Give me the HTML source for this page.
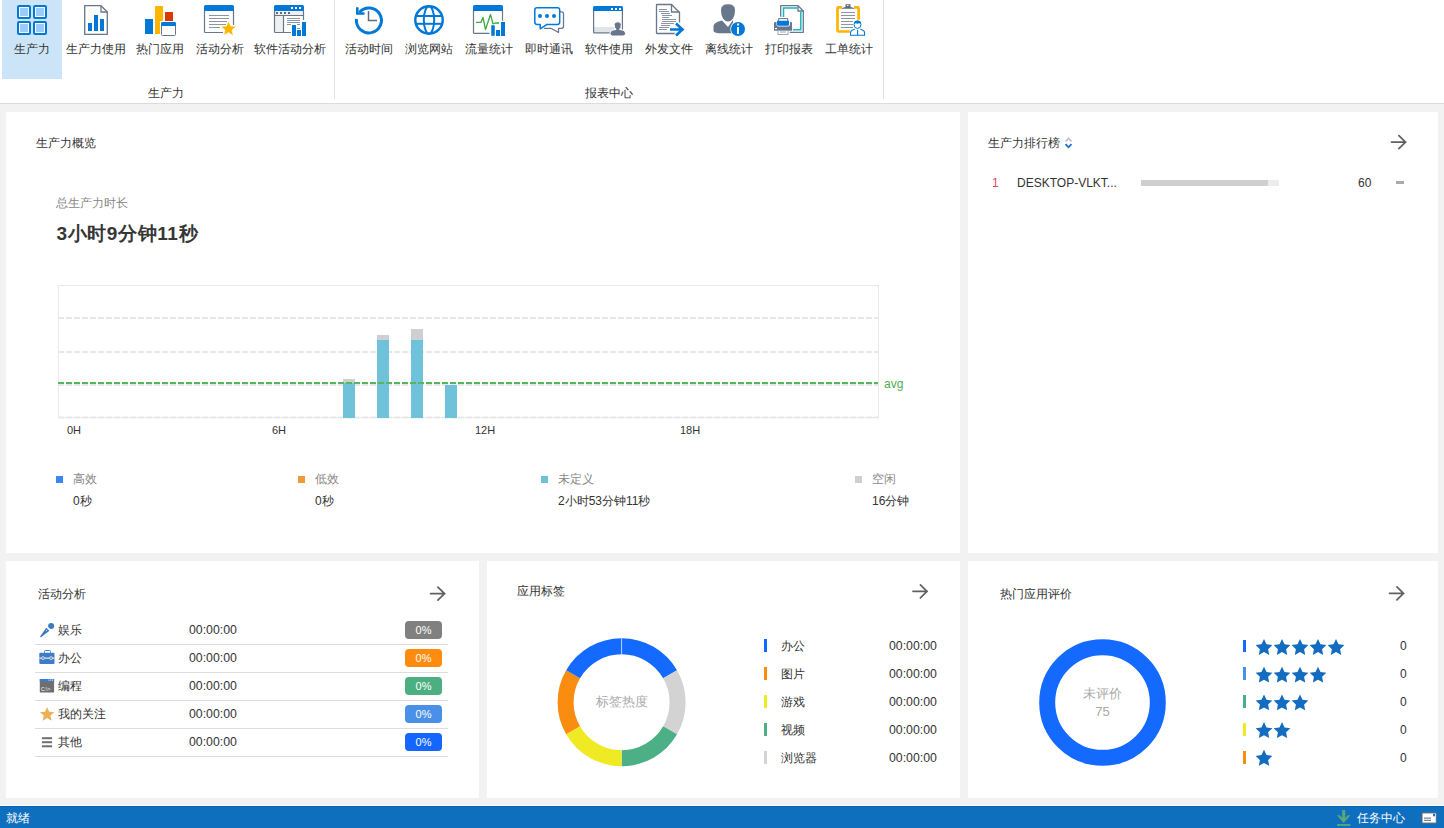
<!DOCTYPE html>
<html><head><meta charset="utf-8">
<style>
*{margin:0;padding:0;box-sizing:border-box}
html,body{width:1444px;height:828px;overflow:hidden;background:#f2f2f2;font-family:"Liberation Sans",sans-serif;font-size:12px;color:#333}
.abs{position:absolute}
#ribbon{position:absolute;left:0;top:0;width:1444px;height:104px;background:#fff;border-bottom:1px solid #dcdcdc}
.btn{position:absolute;top:0;height:79px;text-align:center}
.btn .lbl{position:absolute;left:0;right:0;top:41px;font-size:12px;line-height:16px;color:#333;white-space:nowrap}
.btn svg{position:absolute;top:4px}
.sel{background:#cce4f7}
.sep{position:absolute;top:0;width:1px;height:99px;background:#e1e1e1}
.grp{position:absolute;top:85px;font-size:12px;line-height:16px;color:#333;white-space:nowrap}
.panel{position:absolute;background:#fff}
.t{position:absolute;white-space:nowrap;line-height:16px}
#status{position:absolute;left:0;top:806px;width:1444px;height:22px;background:#0f6fbf;color:#fff;border-top:0}
#wline{position:absolute;left:0;top:805px;width:1444px;height:1px;background:#fffdf8}
</style></head><body>
<div id="ribbon">
  <div class="btn sel" style="left:2px;width:60px"><div class="lbl">生产力</div></div>
  <div class="btn" style="left:64px;width:64px"><div class="lbl">生产力使用</div></div>
  <div class="btn" style="left:130px;width:60px"><div class="lbl">热门应用</div></div>
  <div class="btn" style="left:190px;width:60px"><div class="lbl">活动分析</div></div>
  <div class="btn" style="left:250px;width:80px"><div class="lbl">软件活动分析</div></div>
  <div class="sep" style="left:334px"></div>
  <div class="grp" style="left:148px">生产力</div>
  <div class="btn" style="left:339px;width:60px"><div class="lbl">活动时间</div></div>
  <div class="btn" style="left:399px;width:60px"><div class="lbl">浏览网站</div></div>
  <div class="btn" style="left:459px;width:60px"><div class="lbl">流量统计</div></div>
  <div class="btn" style="left:519px;width:60px"><div class="lbl">即时通讯</div></div>
  <div class="btn" style="left:579px;width:60px"><div class="lbl">软件使用</div></div>
  <div class="btn" style="left:639px;width:60px"><div class="lbl">外发文件</div></div>
  <div class="btn" style="left:699px;width:60px"><div class="lbl">离线统计</div></div>
  <div class="btn" style="left:759px;width:60px"><div class="lbl">打印报表</div></div>
  <div class="btn" style="left:819px;width:60px"><div class="lbl">工单统计</div></div>
  <div class="sep" style="left:883px"></div>
  <div class="grp" style="left:585px">报表中心</div>
<svg class="abs" style="left:0;top:0" width="890" height="40" viewBox="0 0 890 40">
<!-- 1 grid -->
<g>
 <rect x="18" y="6" width="12" height="12" rx="1" fill="#9ccbfa" stroke="#0078d7" stroke-width="2"/>
 <rect x="34" y="6" width="12" height="12" rx="1" fill="#9ccbfa" stroke="#0078d7" stroke-width="2"/>
 <rect x="18" y="22" width="12" height="12" rx="1" fill="#9ccbfa" stroke="#0078d7" stroke-width="2"/>
 <rect x="34" y="22" width="12" height="12" rx="1" fill="#9ccbfa" stroke="#0078d7" stroke-width="2"/>
 <rect x="19.5" y="7.5" width="9" height="9" fill="none" stroke="#fff" stroke-width="1"/>
 <rect x="35.5" y="7.5" width="9" height="9" fill="none" stroke="#fff" stroke-width="1"/>
 <rect x="19.5" y="23.5" width="9" height="9" fill="none" stroke="#fff" stroke-width="1"/>
 <rect x="35.5" y="23.5" width="9" height="9" fill="none" stroke="#fff" stroke-width="1"/>
</g>
<!-- 2 doc chart -->
<g>
 <path d="M84.7 5.7 H101 L107.3 12 V34.3 H84.7 Z" fill="#fff" stroke="#68778c" stroke-width="1.3" stroke-linejoin="round"/>
 <path d="M101 5.7 V12 H107.3" fill="none" stroke="#68778c" stroke-width="1.3"/>
 <rect x="88" y="23" width="4" height="8" fill="#0078d7"/>
 <rect x="94" y="15" width="4" height="16" fill="#0078d7"/>
 <rect x="100" y="19" width="4" height="12" fill="#0078d7"/>
</g>
<!-- 3 hot apps -->
<g>
 <rect x="145" y="19" width="8" height="15" fill="#0078d7"/>
 <path d="M155 6 H163 V21 H160 V34 H155 Z" fill="#ffb400"/>
 <rect x="165" y="12" width="8" height="9" fill="#d83b01"/>
 <rect x="161.5" y="22.5" width="14" height="13" rx="1" fill="#fff" stroke="#68778c" stroke-width="1"/>
 <path d="M161 26 V23.5 Q161 22 162.5 22 H174.5 Q176 22 176 23.5 V26 Z" fill="#0078d7"/>
</g>
<!-- 4 activity analysis -->
<g>
 <path d="M223 32.5 H205.5 Q204.5 32.5 204.5 31.5 V11 M233.5 11 V25" fill="none" stroke="#68778c" stroke-width="1.2"/>
 <path d="M204 11 V6.5 Q204 5 205.5 5 H232.5 Q234 5 234 6.5 V11 Z" fill="#0078d7"/>
 <g stroke="#8a95a5" stroke-width="1">
  <line x1="209" y1="15.5" x2="229" y2="15.5"/>
  <line x1="209" y1="18.5" x2="229" y2="18.5"/>
  <line x1="209" y1="21.5" x2="227" y2="21.5"/>
  <line x1="209" y1="24.5" x2="226" y2="24.5"/>
  <line x1="209" y1="27.5" x2="220" y2="27.5"/>
 </g>
 <path d="M228.50 21.00 L230.62 26.09 L236.11 26.53 L231.92 30.11 L233.20 35.47 L228.50 32.60 L223.80 35.47 L225.08 30.11 L220.89 26.53 L226.38 26.09 Z" fill="#ffb400" stroke="#fff" stroke-width="0.5" stroke-linejoin="round"/>
</g>
<!-- 5 software activity analysis -->
<g>
 <rect x="275" y="11" width="28" height="4" fill="#f0f0f0"/>
 <rect x="275" y="15" width="8" height="17.5" fill="#f0f0f0"/>
 <path d="M291 32.5 H275.5 Q274.5 32.5 274.5 31.5 V11 M303.5 11 V20 M274.5 15.5 H303.5 M283.5 15.5 V32.5" fill="none" stroke="#68778c" stroke-width="1.2"/>
 <path d="M274 11 V6.5 Q274 5 275.5 5 H302.5 Q304 5 304 6.5 V11 Z" fill="#0078d7"/>
 <rect x="291" y="7" width="2" height="2" fill="#fff"/><rect x="295" y="7" width="2" height="2" fill="#fff"/><rect x="299" y="7" width="2" height="2" fill="#fff"/>
 <rect x="276" y="12" width="2" height="2" fill="#5f6b7b"/><rect x="280" y="12" width="2" height="2" fill="#5f6b7b"/><rect x="284" y="12" width="2" height="2" fill="#5f6b7b"/><rect x="288" y="12" width="2" height="2" fill="#5f6b7b"/>
 <g stroke="#8a95a5" stroke-width="1">
  <line x1="287" y1="18.5" x2="300" y2="18.5"/>
  <line x1="287" y1="20.5" x2="300" y2="20.5"/>
  <line x1="287" y1="22.5" x2="300" y2="22.5"/>
  <line x1="287" y1="24.5" x2="291" y2="24.5"/>
  <line x1="297" y1="24.5" x2="300" y2="24.5"/>
  <line x1="297" y1="28.5" x2="300" y2="28.5"/>
 </g>
 <rect x="292" y="25" width="4" height="11" fill="#0078d7"/>
 <rect x="297" y="30" width="4" height="6" fill="#0078d7"/>
 <rect x="302" y="22" width="4" height="14" fill="#0078d7"/>
</g>
<!-- 6 clock -->
<g>
 <path d="M356.5 19 A12.5 12.5 0 1 0 359.5 12.2" fill="none" stroke="#0078d7" stroke-width="3"/>
 <path d="M357.3 7.3 V13.5 H364.5" fill="none" stroke="#0078d7" stroke-width="2.6"/>
 <path d="M368.5 11 V20.5 H377" fill="none" stroke="#5f6b7b" stroke-width="1.5"/>
</g>
<!-- 7 globe -->
<g fill="none" stroke="#0078d7" stroke-width="2.5">
 <circle cx="429" cy="20" r="13.7"/>
 <line x1="416" y1="16" x2="442" y2="16" stroke-width="2"/>
 <line x1="416" y1="23.8" x2="442" y2="23.8" stroke-width="2"/>
 <ellipse cx="429" cy="20" rx="5.2" ry="13.7" stroke-width="2"/>
</g>
<!-- 8 traffic -->
<g>
 <path d="M489.5 33.3 H474 Q473.5 33.3 473.5 32.8 V11 M502.5 11 V20.8" fill="none" stroke="#68778c" stroke-width="1.2"/>
 <path d="M473 11 V6.5 Q473 5 474.5 5 H501.5 Q503 5 503 6.5 V11 Z" fill="#0078d7"/>
 <path d="M476 22.3 H481 L483 17.5 L485.5 29.5 L490.5 14.5 L493 24 L495 23 H499" fill="none" stroke="#3aaa44" stroke-width="1.3" stroke-linejoin="round"/>
 <rect x="491" y="25" width="4" height="11" fill="#0078d7" stroke="#fff" stroke-width="0.5"/>
 <rect x="496" y="30" width="4" height="6" fill="#0078d7"/>
 <rect x="501" y="22" width="4" height="14" fill="#0078d7"/>
</g>
<!-- 9 IM -->
<g>
 <path d="M551 28.3 H544 M558.8 11.8 H561.5 Q563.5 11.8 563.5 13.8 V26.3 Q563.5 28.3 561.5 28.3 H558.5 V32.5 L551 28.3" fill="none" stroke="#68778c" stroke-width="1.3" stroke-linejoin="round"/>
 <path d="M537 7.8 H557.5 Q559.7 7.8 559.7 10 V22 Q559.7 24.4 557.5 24.4 H547 L540.2 28.8 V24.4 H537 Q534.8 24.4 534.8 22 V10 Q534.8 7.8 537 7.8 Z" fill="#fff" stroke="#0078d7" stroke-width="1.5" stroke-linejoin="round"/>
 <circle cx="540" cy="16" r="2" fill="#0078d7"/><circle cx="547" cy="16" r="2" fill="#0078d7"/><circle cx="554" cy="16" r="2" fill="#0078d7"/>
</g>
<!-- 10 software usage -->
<g>
 <rect x="594" y="27" width="20" height="5.5" fill="#e1e4e8"/>
 <path d="M610 32.8 H594.2 Q593.6 32.8 593.6 32.2 V11 M622.4 11 V29.7" fill="none" stroke="#68778c" stroke-width="1.2"/>
 <path d="M593 11 V7.5 Q593 6 594.5 6 H621.5 Q623 6 623 7.5 V11 Z" fill="#0078d7"/>
 <rect x="611" y="8" width="2" height="2" fill="#fff"/><rect x="615" y="8" width="2" height="2" fill="#fff"/><rect x="619" y="8" width="2" height="2" fill="#fff"/>
 <path d="M614.2 24.5 Q614.2 21.8 617.8 21.8 Q621.3 21.8 621.3 24.5 Q621.3 28 619.5 29.5 Q625.5 30 625.5 33.5 Q625.5 36 623 36 H612.5 Q610 36 610 33.5 Q610 30 616 29.5 Q614.2 28 614.2 24.5 Z" fill="#68778c" stroke="#fff" stroke-width="1"/>
</g>
<!-- 11 outgoing file -->
<g>
 <path d="M675.5 33.5 H657 Q656.5 33.5 656.5 33 V5 Q656.5 4.5 657 4.5 H671.5 L679.5 12.5 V22.5" fill="none" stroke="#68778c" stroke-width="1.3" stroke-linejoin="round"/>
 <path d="M671.5 4.5 V12 H679.5" fill="none" stroke="#68778c" stroke-width="1.3"/>
 <g stroke="#8a95a5" stroke-width="1">
  <line x1="659" y1="9.5" x2="667" y2="9.5"/>
  <line x1="659" y1="11.5" x2="669" y2="11.5"/>
  <line x1="661" y1="13.5" x2="670" y2="13.5"/>
  <line x1="662" y1="15.5" x2="672" y2="15.5"/>
  <line x1="662" y1="17.5" x2="669" y2="17.5"/>
  <line x1="662" y1="19.5" x2="676" y2="19.5"/>
  <line x1="662" y1="21.5" x2="676" y2="21.5"/>
  <line x1="661" y1="23.5" x2="674" y2="23.5"/>
  <line x1="661" y1="25.5" x2="670" y2="25.5"/>
  <line x1="659" y1="27.5" x2="669" y2="27.5"/>
  <line x1="659" y1="29.5" x2="667" y2="29.5"/>
 </g>
 <path d="M670 29.5 H683 M676 23.5 L682.5 29.5 L676 35.5" fill="none" stroke="#fff" stroke-width="5"/>
 <path d="M670 29.5 H683 M676 23.5 L682.5 29.5 L676 35.5" fill="none" stroke="#0078d7" stroke-width="2.6"/>
</g>
<!-- 12 offline -->
<g>
 <path d="M722 20.5 Q714 22 713.5 26 V31 Q714 33.3 722 33.3 H733 V20.5 Q733.5 20 733 20 L728 27 Z" fill="#68778c"/>
 <path d="M721 10 Q721 4.2 728 4.2 Q735 4.2 735 10 Q735 15 733 18.5 Q731 21.5 728 21.5 Q725 21.5 723 18.5 Q721 15 721 10 Z" fill="#68778c"/>
 <circle cx="738" cy="29" r="7.7" fill="#fff"/>
 <circle cx="738" cy="29" r="7" fill="#0078d7"/>
 <rect x="737" y="23.5" width="2" height="2" fill="#fff"/>
 <rect x="737" y="27" width="2" height="7" fill="#fff"/>
</g>
<!-- 13 print -->
<g>
 <path d="M780.7 16.7 V5.7 H798 L803.3 11 V32.3 H789.8" fill="none" stroke="#68778c" stroke-width="1.3" stroke-linejoin="round"/>
 <path d="M798 5.7 V11 H803.3" fill="none" stroke="#68778c" stroke-width="1.3"/>
 <path d="M783.5 16.9 V8 H797.5 M800.8 11.5 V29.7 H793" fill="none" stroke="#1ab4c0" stroke-width="1.5"/>
 <rect x="778.7" y="18.6" width="9" height="4" fill="#fff" stroke="#68778c" stroke-width="1"/>
 <path d="M774 23 Q774 22 775.5 22 H776.5 V25 Q777 26.5 779 26.5 H787.5 Q789.5 26.5 790 25 V22 H791 Q792 22 792 23 V30.7 H774 Z" fill="#68778c"/>
 <path d="M777 20.8 H789 V24.3 Q789 25.8 787.5 25.8 H778.5 Q777 25.8 777 24.3 Z" fill="#0078d7"/>
 <rect x="775" y="28" width="2" height="1.2" fill="#fff"/>
 <rect x="778" y="30.5" width="10" height="4" fill="#fff" stroke="#a0a8b4" stroke-width="1"/>
 <line x1="780" y1="32" x2="786" y2="32" stroke="#8a95a5" stroke-width="0.8"/>
</g>
<!-- 14 work order -->
<g>
 <path d="M849.8 31.5 H838.5 Q837.5 31.5 837.5 30.5 V8.3 Q837.5 7.3 838.5 7.3 H842 M854 7.3 H857.6 Q858.6 7.3 858.6 8.3 V19.8" fill="none" stroke="#ffb400" stroke-width="2.7"/>
 <path d="M845.5 4.2 H850.5 V7 L854 8 V8.8 H842 V8 L845.5 7 Z" fill="#5f6b7b"/>
 <rect x="847" y="5" width="1.5" height="1" fill="#fff"/>
 <g stroke="#8a95a5" stroke-width="1">
  <line x1="841" y1="12.5" x2="855" y2="12.5"/>
  <line x1="841" y1="15.5" x2="855" y2="15.5"/>
  <line x1="841" y1="18.5" x2="855" y2="18.5"/>
  <line x1="841" y1="21.5" x2="853" y2="21.5"/>
  <line x1="841" y1="24.5" x2="853" y2="24.5"/>
  <line x1="841" y1="27.5" x2="853" y2="27.5"/>
 </g>
 <ellipse cx="857.5" cy="24.8" rx="4.2" ry="4.5" fill="#fff"/>
 <path d="M854 24.5 Q854 20.8 857.5 20.8 Q861 20.8 861 24.5 Q861 28.4 857.5 28.4 Q854 28.4 854 24.5 Z" fill="#fff" stroke="#0078d7" stroke-width="1"/>
 <path d="M854 23.8 Q854 20.8 857.5 20.8 Q861 20.8 861 23.8 Q859 22.8 857.5 23.8 Q856 22.8 854 23.8 Z" fill="#0078d7"/>
 <path d="M854.8 29.3 Q850.5 30.3 850.5 33 V35.2 H864.6 V33 Q864.6 30.3 860.3 29.3 M857.6 29.8 V35" fill="#fff" stroke="#0078d7" stroke-width="1.1"/>
</g>
</svg>
</div>

<!-- Panel 1 -->
<div class="panel" style="left:6px;top:112px;width:954px;height:441px"></div>
<div class="t" style="left:36px;top:135px">生产力概览</div>
<div class="t" style="left:56px;top:195px;color:#888">总生产力时长</div>
<div class="t" style="left:56.5px;top:222px;font-size:19px;line-height:24px;font-weight:bold;color:#363636;letter-spacing:0.6px">3小时9分钟11秒</div>

<!-- chart -->
<svg class="abs" style="left:0;top:0" width="960" height="560">
  <rect x="58.5" y="285.5" width="820" height="132" fill="none" stroke="#e8e8e8" stroke-width="1"/>
  <line x1="58" y1="318" x2="878" y2="318" stroke="#e8e8e8" stroke-width="2" stroke-dasharray="6 2"/>
  <line x1="58" y1="352" x2="878" y2="352" stroke="#e8e8e8" stroke-width="2" stroke-dasharray="6 2"/>
  <line x1="58" y1="385" x2="878" y2="385" stroke="#e8e8e8" stroke-width="2" stroke-dasharray="6 2"/>
  <line x1="58" y1="417.5" x2="878" y2="417.5" stroke="#e8e8e8" stroke-width="2" stroke-dasharray="6 2"/>
  <rect x="343" y="379" width="12" height="4" fill="#cfcfd3"/>
  <rect x="343" y="383" width="12" height="35" fill="#6ec3da"/>
  <rect x="377" y="335" width="12" height="5" fill="#cfcfd3"/>
  <rect x="377" y="340" width="12" height="78" fill="#6ec3da"/>
  <rect x="411" y="329" width="12" height="11" fill="#cfcfd3"/>
  <rect x="411" y="340" width="12" height="78" fill="#6ec3da"/>
  <rect x="445" y="385" width="12" height="33" fill="#6ec3da"/>
  <line x1="58" y1="383" x2="878" y2="383" stroke="#55b759" stroke-width="2" stroke-dasharray="6 2"/>
</svg>
<div class="t" style="left:67px;top:422px;font-size:11px">0H</div>
<div class="t" style="left:272px;top:422px;font-size:11px">6H</div>
<div class="t" style="left:475px;top:422px;font-size:11px">12H</div>
<div class="t" style="left:680px;top:422px;font-size:11px">18H</div>
<div class="t" style="left:884px;top:376px;color:#4cb050">avg</div>

<!-- legend -->
<div class="abs" style="left:56px;top:476px;width:7px;height:7px;background:#3d85f0"></div>
<div class="t" style="left:73px;top:471px;color:#888">高效</div>
<div class="t" style="left:73px;top:493px">0秒</div>
<div class="abs" style="left:298px;top:476px;width:7px;height:7px;background:#f0993a"></div>
<div class="t" style="left:315px;top:471px;color:#888">低效</div>
<div class="t" style="left:315px;top:493px">0秒</div>
<div class="abs" style="left:541px;top:476px;width:7px;height:7px;background:#6ec3da"></div>
<div class="t" style="left:558px;top:471px;color:#888">未定义</div>
<div class="t" style="left:558px;top:493px">2小时53分钟11秒</div>
<div class="abs" style="left:855px;top:476px;width:7px;height:7px;background:#cfcfd3"></div>
<div class="t" style="left:872px;top:471px;color:#888">空闲</div>
<div class="t" style="left:872px;top:493px">16分钟</div>

<!-- Panel 2 -->
<div class="panel" style="left:968px;top:112px;width:470px;height:441px"></div>
<div class="t" style="left:988px;top:135px">生产力排行榜</div>
<div class="t" style="left:992px;top:175px;color:#e8465a">1</div>
<div class="t" style="left:1017px;top:175px">DESKTOP-VLKT...</div>
<div class="abs" style="left:1141px;top:180px;width:138px;height:6px;background:#ececec"></div>
<div class="abs" style="left:1141px;top:180px;width:127px;height:6px;background:#cfcfcf"></div>
<div class="t" style="left:1358px;top:175px">60</div>
<div class="abs" style="left:1396px;top:181px;width:8px;height:3px;background:#aaa"></div>

<!-- Panel 3 -->
<div class="panel" style="left:6px;top:561px;width:473px;height:237px"></div>
<div class="t" style="left:38px;top:586px">活动分析</div>

<!-- Panel 4 -->
<div class="panel" style="left:487px;top:561px;width:473px;height:237px"></div>
<div class="t" style="left:517px;top:583px">应用标签</div>

<!-- Panel 5 -->
<div class="panel" style="left:968px;top:561px;width:470px;height:237px"></div>
<div class="t" style="left:1000px;top:586px">热门应用评价</div>

<svg class="abs" style="left:0;top:0" width="1444" height="828">
<path d="M1391.5 142.1 H1405.8 M1398.9 135.6 L1405.5 142.1 L1398.9 148.6" fill="none" stroke="#606060" stroke-width="1.7" stroke-linecap="round" stroke-linejoin="round"/>
<path d="M430.5 593.6 H444.8 M437.9 587.1 L444.5 593.6 L437.9 600.1" fill="none" stroke="#606060" stroke-width="1.7" stroke-linecap="round" stroke-linejoin="round"/>
<path d="M913 591.3 H927.3 M920.4 584.8 L927 591.3 L920.4 597.8" fill="none" stroke="#606060" stroke-width="1.7" stroke-linecap="round" stroke-linejoin="round"/>
<path d="M1389.5 593.3 H1403.8 M1396.9 586.8 L1403.5 593.3 L1396.9 599.8" fill="none" stroke="#606060" stroke-width="1.7" stroke-linecap="round" stroke-linejoin="round"/>
<path d="M1065.5 141.4 L1068.5 138.3 L1071.5 141.4" fill="none" stroke="#bdbdbd" stroke-width="1.6"/>
<path d="M1065.5 144.2 L1068.5 147.3 L1071.5 144.2" fill="none" stroke="#1a6dc4" stroke-width="1.8"/>
<rect x="35" y="644" width="413" height="1" fill="#dddddd"/>
<rect x="35" y="672" width="413" height="1" fill="#dddddd"/>
<rect x="35" y="700" width="413" height="1" fill="#dddddd"/>
<rect x="35" y="728" width="413" height="1" fill="#dddddd"/>
<rect x="35" y="756" width="413" height="1" fill="#dddddd"/>
<circle cx="51.1" cy="625.9" r="3" fill="#3d7ac0"/>
<path d="M46.2 627.8 L49.5 630.8 L41 637.2 Q40 637.6 40.1 636.6 Z" fill="#3d7ac0"/>
<path d="M48.2 627.6 L50.2 629.4" stroke="#fff" stroke-width="0.7"/>
<circle cx="46.5" cy="630.5" r="0.55" fill="#fff"/>
<rect x="44.5" y="650.5" width="6" height="3" rx="1" fill="none" stroke="#3d7cc9" stroke-width="1"/>
<rect x="39.3" y="652.7" width="15.2" height="11.4" rx="1" fill="#3d7cc9"/>
<rect x="39.3" y="657.6" width="15.2" height="1" fill="#fff"/>
<circle cx="43" cy="658.1" r="1.5" fill="#7a8a9a" stroke="#fff" stroke-width="0.6"/>
<circle cx="51" cy="658.1" r="1.5" fill="#7a8a9a" stroke="#fff" stroke-width="0.6"/>
<rect x="39.8" y="679" width="14.3" height="13.5" rx="0.6" fill="#6e6e6e"/>
<rect x="39.8" y="679" width="14.3" height="2.6" fill="#3d7cc9"/>
<rect x="48.5" y="679.6" width="1" height="1" fill="#fff"/><rect x="50.3" y="679.6" width="1" height="1" fill="#fff"/><rect x="52.1" y="679.6" width="1" height="1" fill="#fff"/>
<text x="41" y="690.8" font-family="Liberation Sans" font-size="5" fill="#fff">C:\&gt;</text>
<path d="M47.10 706.90 L49.16 711.67 L54.33 712.15 L50.43 715.58 L51.57 720.65 L47.10 718.00 L42.63 720.65 L43.77 715.58 L39.87 712.15 L45.04 711.67 Z" fill="#ebb057" />
<rect x="41.9" y="737.2" width="10.2" height="2" fill="#707070"/>
<rect x="41.9" y="741.2" width="10.2" height="2" fill="#707070"/>
<rect x="41.9" y="745.3" width="10.2" height="2" fill="#707070"/>
<rect x="405" y="621" width="37" height="18" rx="4" fill="#808080"/>
<rect x="405" y="649" width="37" height="18" rx="4" fill="#ff8c0f"/>
<rect x="405" y="677" width="37" height="18" rx="4" fill="#4caf82"/>
<rect x="405" y="705" width="37" height="18" rx="4" fill="#4a90e8"/>
<rect x="405" y="733" width="37" height="18" rx="4" fill="#1565ff"/>
<path d="M621.60 638.20 A64 64 0 0 1 677.03 670.20 L663.17 678.20 A48 48 0 0 0 621.60 654.20 Z" fill="#1469ff"/>
<path d="M677.03 670.20 A64 64 0 0 1 677.03 734.20 L663.17 726.20 A48 48 0 0 0 663.17 678.20 Z" fill="#d3d3d3"/>
<path d="M677.03 734.20 A64 64 0 0 1 621.60 766.20 L621.60 750.20 A48 48 0 0 0 663.17 726.20 Z" fill="#4caf85"/>
<path d="M621.60 766.20 A64 64 0 0 1 566.17 734.20 L580.03 726.20 A48 48 0 0 0 621.60 750.20 Z" fill="#f0ea24"/>
<path d="M566.17 734.20 A64 64 0 0 1 566.17 670.20 L580.03 678.20 A48 48 0 0 0 580.03 726.20 Z" fill="#fa8c10"/>
<path d="M566.17 670.20 A64 64 0 0 1 621.60 638.20 L621.60 654.20 A48 48 0 0 0 580.03 678.20 Z" fill="#1469ff"/>
<line x1="621.6" y1="638.2" x2="621.6" y2="654.2" stroke="#fff" stroke-width="0.6"/>
<rect x="764" y="639" width="3" height="13" fill="#1469ff"/>
<rect x="764" y="667" width="3" height="13" fill="#fa8c10"/>
<rect x="764" y="695" width="3" height="13" fill="#f0ea24"/>
<rect x="764" y="723" width="3" height="13" fill="#4caf85"/>
<rect x="764" y="751" width="3" height="13" fill="#d3d3d3"/>
<circle cx="1102.5" cy="702.5" r="55.3" fill="none" stroke="#1469ff" stroke-width="16"/>
<rect x="1243" y="640" width="3" height="12" fill="#1469ff"/>
<path d="M1264.00 639.00 L1266.53 644.32 L1272.37 645.08 L1268.09 649.13 L1269.17 654.92 L1264.00 652.10 L1258.83 654.92 L1259.91 649.13 L1255.63 645.08 L1261.47 644.32 Z" fill="#136cbf" />
<path d="M1282.00 639.00 L1284.53 644.32 L1290.37 645.08 L1286.09 649.13 L1287.17 654.92 L1282.00 652.10 L1276.83 654.92 L1277.91 649.13 L1273.63 645.08 L1279.47 644.32 Z" fill="#136cbf" />
<path d="M1300.00 639.00 L1302.53 644.32 L1308.37 645.08 L1304.09 649.13 L1305.17 654.92 L1300.00 652.10 L1294.83 654.92 L1295.91 649.13 L1291.63 645.08 L1297.47 644.32 Z" fill="#136cbf" />
<path d="M1318.00 639.00 L1320.53 644.32 L1326.37 645.08 L1322.09 649.13 L1323.17 654.92 L1318.00 652.10 L1312.83 654.92 L1313.91 649.13 L1309.63 645.08 L1315.47 644.32 Z" fill="#136cbf" />
<path d="M1336.00 639.00 L1338.53 644.32 L1344.37 645.08 L1340.09 649.13 L1341.17 654.92 L1336.00 652.10 L1330.83 654.92 L1331.91 649.13 L1327.63 645.08 L1333.47 644.32 Z" fill="#136cbf" />
<rect x="1243" y="667" width="3" height="13" fill="#4a90e8"/>
<path d="M1264.00 666.70 L1266.53 672.02 L1272.37 672.78 L1268.09 676.83 L1269.17 682.62 L1264.00 679.80 L1258.83 682.62 L1259.91 676.83 L1255.63 672.78 L1261.47 672.02 Z" fill="#136cbf" />
<path d="M1282.00 666.70 L1284.53 672.02 L1290.37 672.78 L1286.09 676.83 L1287.17 682.62 L1282.00 679.80 L1276.83 682.62 L1277.91 676.83 L1273.63 672.78 L1279.47 672.02 Z" fill="#136cbf" />
<path d="M1300.00 666.70 L1302.53 672.02 L1308.37 672.78 L1304.09 676.83 L1305.17 682.62 L1300.00 679.80 L1294.83 682.62 L1295.91 676.83 L1291.63 672.78 L1297.47 672.02 Z" fill="#136cbf" />
<path d="M1318.00 666.70 L1320.53 672.02 L1326.37 672.78 L1322.09 676.83 L1323.17 682.62 L1318.00 679.80 L1312.83 682.62 L1313.91 676.83 L1309.63 672.78 L1315.47 672.02 Z" fill="#136cbf" />
<rect x="1243" y="695" width="3" height="13" fill="#4caf85"/>
<path d="M1264.00 694.40 L1266.53 699.72 L1272.37 700.48 L1268.09 704.53 L1269.17 710.32 L1264.00 707.50 L1258.83 710.32 L1259.91 704.53 L1255.63 700.48 L1261.47 699.72 Z" fill="#136cbf" />
<path d="M1282.00 694.40 L1284.53 699.72 L1290.37 700.48 L1286.09 704.53 L1287.17 710.32 L1282.00 707.50 L1276.83 710.32 L1277.91 704.53 L1273.63 700.48 L1279.47 699.72 Z" fill="#136cbf" />
<path d="M1300.00 694.40 L1302.53 699.72 L1308.37 700.48 L1304.09 704.53 L1305.17 710.32 L1300.00 707.50 L1294.83 710.32 L1295.91 704.53 L1291.63 700.48 L1297.47 699.72 Z" fill="#136cbf" />
<rect x="1243" y="723" width="3" height="13" fill="#f0ea24"/>
<path d="M1264.00 722.10 L1266.53 727.42 L1272.37 728.18 L1268.09 732.23 L1269.17 738.02 L1264.00 735.20 L1258.83 738.02 L1259.91 732.23 L1255.63 728.18 L1261.47 727.42 Z" fill="#136cbf" />
<path d="M1282.00 722.10 L1284.53 727.42 L1290.37 728.18 L1286.09 732.23 L1287.17 738.02 L1282.00 735.20 L1276.83 738.02 L1277.91 732.23 L1273.63 728.18 L1279.47 727.42 Z" fill="#136cbf" />
<rect x="1243" y="751" width="3" height="13" fill="#fa8c10"/>
<path d="M1264.00 749.80 L1266.53 755.12 L1272.37 755.88 L1268.09 759.93 L1269.17 765.72 L1264.00 762.90 L1258.83 765.72 L1259.91 759.93 L1255.63 755.88 L1261.47 755.12 Z" fill="#136cbf" />
</svg>
<div class="t" style="left:58px;top:621.5px">娱乐</div>
<div class="t" style="left:58px;top:649.5px">办公</div>
<div class="t" style="left:58px;top:677.5px">编程</div>
<div class="t" style="left:58px;top:705.5px">我的关注</div>
<div class="t" style="left:58px;top:733.5px">其他</div>
<div class="t" style="left:189px;top:622px;font-size:12.3px">00:00:00</div>
<div class="t" style="left:189px;top:650px;font-size:12.3px">00:00:00</div>
<div class="t" style="left:189px;top:678px;font-size:12.3px">00:00:00</div>
<div class="t" style="left:189px;top:706px;font-size:12.3px">00:00:00</div>
<div class="t" style="left:189px;top:734px;font-size:12.3px">00:00:00</div>
<div class="t" style="left:405px;top:621px;width:37px;text-align:center;font-size:11px;line-height:18px;color:#fff">0%</div>
<div class="t" style="left:405px;top:649px;width:37px;text-align:center;font-size:11px;line-height:18px;color:#fff">0%</div>
<div class="t" style="left:405px;top:677px;width:37px;text-align:center;font-size:11px;line-height:18px;color:#fff">0%</div>
<div class="t" style="left:405px;top:705px;width:37px;text-align:center;font-size:11px;line-height:18px;color:#fff">0%</div>
<div class="t" style="left:405px;top:733px;width:37px;text-align:center;font-size:11px;line-height:18px;color:#fff">0%</div>
<div class="t" style="left:581px;top:694px;width:82px;text-align:center;font-size:13px;color:#aaa">标签热度</div>
<div class="t" style="left:781px;top:638px">办公</div>
<div class="t" style="left:781px;top:666px">图片</div>
<div class="t" style="left:781px;top:694px">游戏</div>
<div class="t" style="left:781px;top:722px">视频</div>
<div class="t" style="left:781px;top:750px">浏览器</div>
<div class="t" style="left:889px;top:638px;font-size:12.3px">00:00:00</div>
<div class="t" style="left:889px;top:666px;font-size:12.3px">00:00:00</div>
<div class="t" style="left:889px;top:694px;font-size:12.3px">00:00:00</div>
<div class="t" style="left:889px;top:722px;font-size:12.3px">00:00:00</div>
<div class="t" style="left:889px;top:750px;font-size:12.3px">00:00:00</div>
<div class="t" style="left:1062px;top:685.5px;width:81px;text-align:center;font-size:13px;color:#aaa">未评价</div>
<div class="t" style="left:1062px;top:704px;width:81px;text-align:center;font-size:13px;color:#aaa">75</div>
<div class="t" style="left:1400px;top:638px">0</div>
<div class="t" style="left:1400px;top:666px">0</div>
<div class="t" style="left:1400px;top:694px">0</div>
<div class="t" style="left:1400px;top:722px">0</div>
<div class="t" style="left:1400px;top:750px">0</div>
<div id="wline"></div><div id="status">
<svg class="abs" style="left:0;top:0" width="1444" height="22" viewBox="0 806 1444 22">
 <rect x="0" y="806" width="1444" height="1" fill="#0a62b4"/>
 <path d="M1343.7 810 V821" fill="none" stroke="#5aa878" stroke-width="3"/>
 <path d="M1337 815.3 L1339.6 815.3 L1343.7 819.6 L1347.8 815.3 L1350.4 815.3 L1343.7 823 Z" fill="#5aa878"/>
 <rect x="1337" y="824.1" width="13.4" height="1.8" fill="#5aa878"/>
 <rect x="1422" y="812.9" width="14.3" height="10.2" fill="#fff" stroke="#5a6470" stroke-width="1"/>
 <rect x="1433" y="813.8" width="2" height="2.5" fill="#1469ff"/>
 <rect x="1424" y="817.6" width="7" height="1" fill="#5a6470"/>
 <rect x="1424" y="819.8" width="7" height="1" fill="#5a6470"/>
</svg>

  <div class="t" style="left:6px;top:4px;color:#fff">就绪</div>
  <div class="t" style="left:1357px;top:4px;color:#fff">任务中心</div>
</div>
</body></html>
